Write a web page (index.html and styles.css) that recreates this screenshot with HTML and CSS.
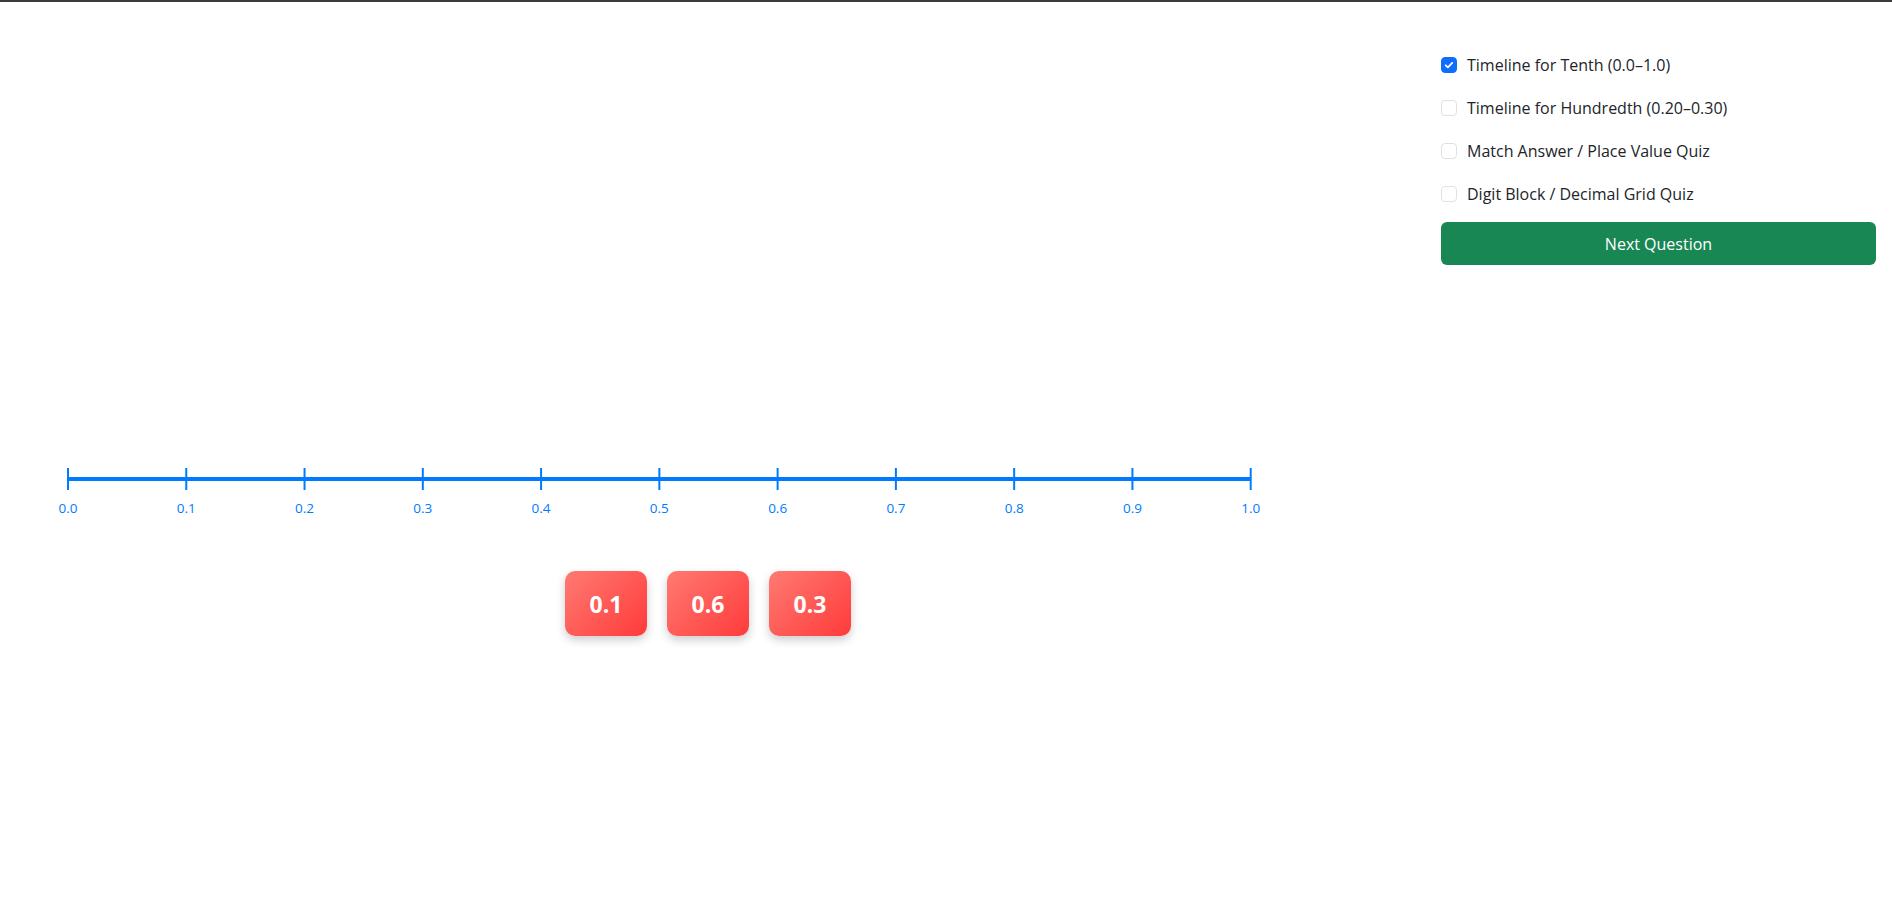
FILE: index.html
```html
<!DOCTYPE html>
<html lang="en">
<head>
<meta charset="utf-8">
<title>Decimal Timeline</title>
<link rel="stylesheet" href="styles.css">
</head>
<body>
<div class="app">
  <main class="stage">
    <svg class="numline" width="1300" height="52" viewBox="0 0 1300 52">
      <line class="axis" x1="68" y1="12" x2="1250.7" y2="12"/>
      <g class="ticks">
        <line x1="68" y1="1" x2="68" y2="23"/>
        <line x1="186.27" y1="1" x2="186.27" y2="23"/>
        <line x1="304.54" y1="1" x2="304.54" y2="23"/>
        <line x1="422.81" y1="1" x2="422.81" y2="23"/>
        <line x1="541.08" y1="1" x2="541.08" y2="23"/>
        <line x1="659.35" y1="1" x2="659.35" y2="23"/>
        <line x1="777.62" y1="1" x2="777.62" y2="23"/>
        <line x1="895.89" y1="1" x2="895.89" y2="23"/>
        <line x1="1014.16" y1="1" x2="1014.16" y2="23"/>
        <line x1="1132.43" y1="1" x2="1132.43" y2="23"/>
        <line x1="1250.7" y1="1" x2="1250.7" y2="23"/>
      </g>
      <g class="labels">
        <text x="68" y="46">0.0</text>
        <text x="186.27" y="46">0.1</text>
        <text x="304.54" y="46">0.2</text>
        <text x="422.81" y="46">0.3</text>
        <text x="541.08" y="46">0.4</text>
        <text x="659.35" y="46">0.5</text>
        <text x="777.62" y="46">0.6</text>
        <text x="895.89" y="46">0.7</text>
        <text x="1014.16" y="46">0.8</text>
        <text x="1132.43" y="46">0.9</text>
        <text x="1250.7" y="46">1.0</text>
      </g>
    </svg>
    <div class="tiles">
      <div class="tile">0.1</div>
      <div class="tile">0.6</div>
      <div class="tile">0.3</div>
    </div>
  </main>
  <aside class="panel">
    <label class="opt">
      <span class="box checked"><svg viewBox="0 0 16 16" width="16" height="16"><path d="M4.2 8.3l2.5 2.4 5-5.2" fill="none" stroke="#fff" stroke-width="2" stroke-linecap="round" stroke-linejoin="round"/></svg></span>
      <span class="txt">Timeline for Tenth (0.0–1.0)</span>
    </label>
    <label class="opt">
      <span class="box"></span>
      <span class="txt">Timeline for Hundredth (0.20–0.30)</span>
    </label>
    <label class="opt">
      <span class="box"></span>
      <span class="txt">Match Answer / Place Value Quiz</span>
    </label>
    <label class="opt">
      <span class="box"></span>
      <span class="txt">Digit Block / Decimal Grid Quiz</span>
    </label>
    <button class="next">Next Question</button>
  </aside>
</div>
</body>
</html>
```

FILE: styles.css
```css
html, body {
  margin: 0;
  padding: 0;
  background: #fff;
}
body {
  border-top: 2px solid #3a3a3a;
  font-family: "Open Sans", "Noto Sans", sans-serif;
  color: #212529;
}
.app {
  display: flex;
  height: 905px;
}
.stage {
  flex: 1;
  display: flex;
  flex-direction: column;
  padding-top: 465px;
}
.numline {
  display: block;
}
.numline .axis {
  stroke: #007bff;
  stroke-width: 4;
}
.numline .ticks line {
  stroke: #007bff;
  stroke-width: 2;
}
.numline .labels text {
  fill: #007bff;
  font-family: "Open Sans", sans-serif;
  font-size: 13.5px;
  text-anchor: middle;
}
.tiles {
  display: flex;
  justify-content: center;
  gap: 20px;
  margin-top: 52px;
}
.tile {
  width: 82px;
  height: 65px;
  border-radius: 10px;
  background: linear-gradient(135deg, #ff7a72 0%, #ff3b3b 100%);
  box-shadow: 0 4px 10px rgba(0, 0, 0, 0.2);
  color: #fff;
  font-weight: 700;
  font-size: 23px;
  display: flex;
  align-items: center;
  justify-content: center;
}
.panel {
  width: 435px;
  padding: 51px 16px 0 25px;
  display: flex;
  flex-direction: column;
}
.opt {
  display: flex;
  align-items: center;
  gap: 10px;
  height: 24px;
  margin-bottom: 19px;
  font-size: 16px;
  line-height: 24px;
}
.box {
  width: 16px;
  height: 16px;
  box-sizing: border-box;
  border: 1px solid #dee2e6;
  border-radius: 4px;
  background: #fff;
  display: flex;
  align-items: center;
  justify-content: center;
  flex: none;
}
.box.checked {
  background: #0d6efd;
  border-color: #0d6efd;
}
.box svg {
  display: block;
}
.next {
  margin-top: -3px;
  height: 43px;
  border: none;
  border-radius: 6px;
  background: #198754;
  color: #fff;
  font-family: "Open Sans", "Noto Sans", sans-serif;
  font-size: 16px;
  padding: 0;
}
```
